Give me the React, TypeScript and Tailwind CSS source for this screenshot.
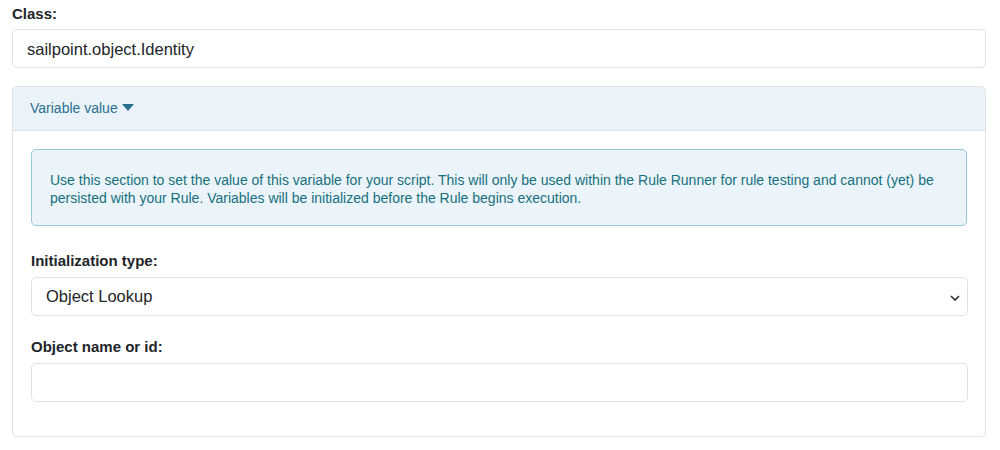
import React, { useState } from "react";

const App: React.FC = () => {
  const [initType, setInitType] = useState("Object Lookup");
  const [objectName, setObjectName] = useState("");

  return (
    <div className="w-[1000px] h-[450px] bg-white px-3 pt-[5px] font-['Liberation_Sans',Arial,sans-serif] text-[#212529]">
      <label className="block text-[15px] font-bold leading-[18px] mb-[6px]">Class:</label>
      <div className="w-[974px] h-[39px] border border-[#dfe2e6] rounded-[5px] px-[14px] pt-[1px] flex items-center text-[16.5px]">
        sailpoint.object.Identity
      </div>

      <div className="mt-[18px] w-[974px] h-[351px] border border-[#dfe2e6] rounded-[5px] overflow-hidden">
        <div className="h-[44px] bg-[#eaf3f9] border-b border-[#dfe2e6] flex items-center pl-[17px] text-[14px] text-[#2a6f8f]">
          Variable value
          <svg width="12" height="8" viewBox="0 0 12 8" className="ml-[4px] mt-[-1px]">
            <path d="M0 0 L12 0 L6 7 Z" fill="#2a6f8f" />
          </svg>
        </div>

        <div className="px-[18px] pt-[18px]">
          <div className="h-[77px] bg-[#eaf4fa] border border-[#96c8dc] rounded-[5px] pl-[18px] pr-[14px] pt-[2px] flex items-center text-[14px] leading-[18px] text-[#17707e]">
            Use this section to set the value of this variable for your script. This will only be used within the Rule Runner for rule testing and cannot (yet) be persisted with your Rule. Variables will be initialized before the Rule begins execution.
          </div>

          <label className="block mt-[26px] text-[15px] font-bold leading-[18px] mb-[7px]">Initialization type:</label>
          <div className="relative w-[937px] h-[39px] border border-[#dfe2e6] rounded-[5px] flex items-center px-[14px] text-[16.5px]">
            <select
              value={initType}
              onChange={(e) => setInitType(e.target.value)}
              className="appearance-none bg-transparent w-full outline-none"
            >
              <option>Object Lookup</option>
              <option>String</option>
              <option>Script</option>
            </select>
            <svg width="10" height="7" viewBox="0 0 10 7" className="absolute right-[7px] top-[17px] pointer-events-none">
              <path d="M1 1 L5 5 L9 1" stroke="#333" strokeWidth="1.6" fill="none" />
            </svg>
          </div>

          <label className="block mt-[22px] text-[15px] font-bold leading-[18px] mb-[7px]">Object name or id:</label>
          <input
            value={objectName}
            onChange={(e) => setObjectName(e.target.value)}
            className="block w-[937px] h-[39px] border border-[#dfe2e6] rounded-[5px] px-[14px] text-[16.5px] outline-none"
          />
        </div>
      </div>
    </div>
  );
};

export default App;
